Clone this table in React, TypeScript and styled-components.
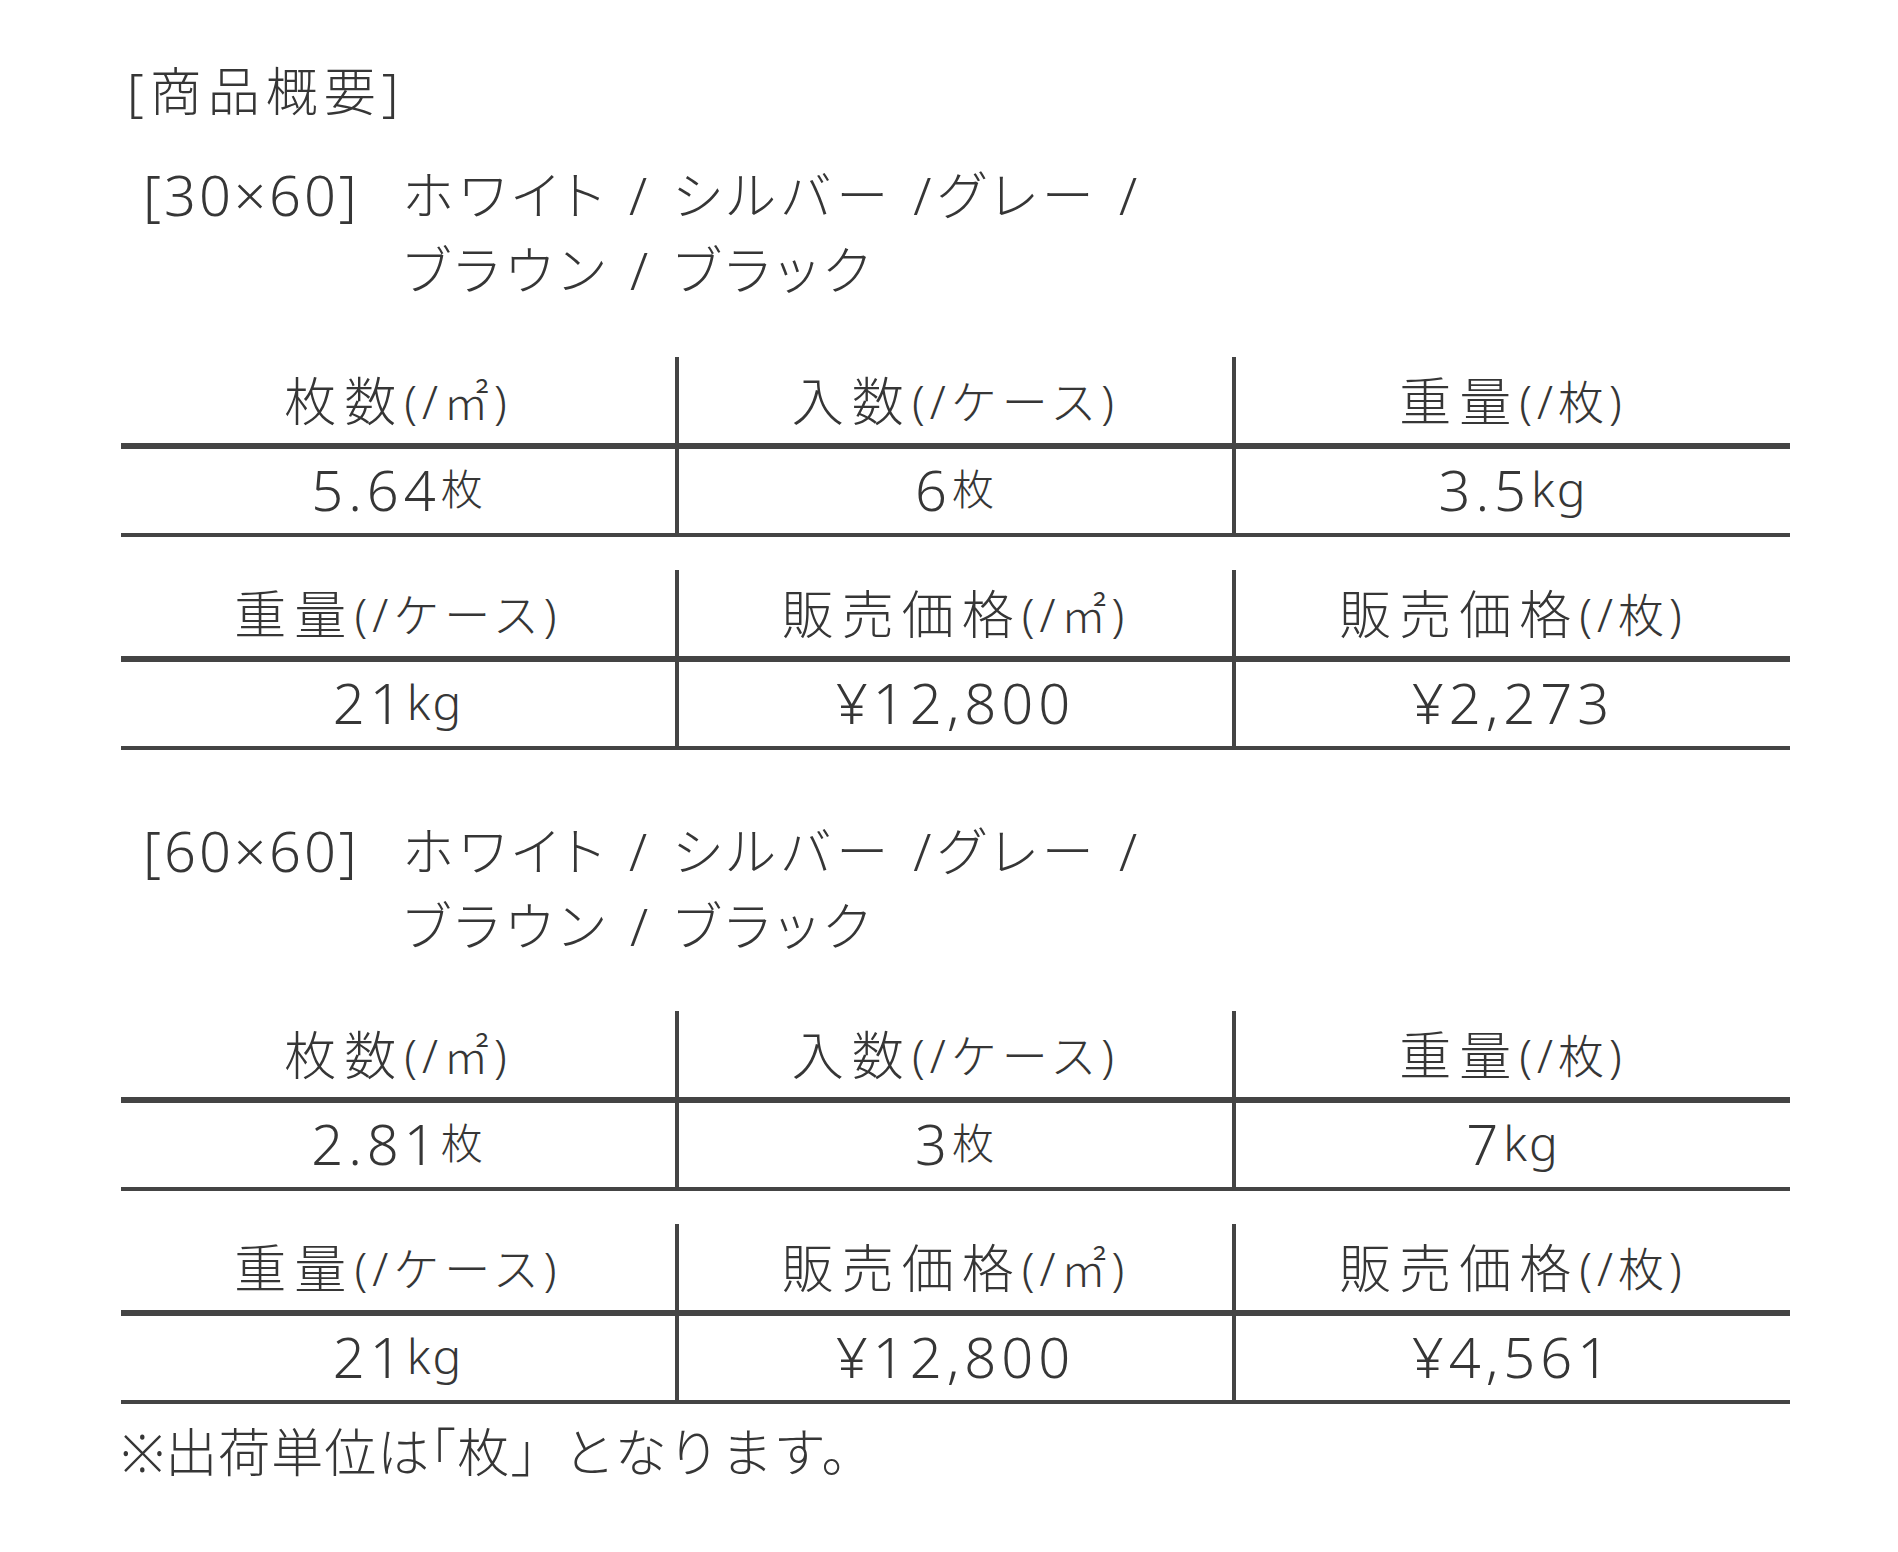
import React from 'react';
import styled, { createGlobalStyle } from 'styled-components';

const Global = createGlobalStyle`
  html, body { margin: 0; padding: 0; background: #ffffff; }
  body {
    font-family: "Noto Sans", "Noto Sans CJK JP", sans-serif;
    font-weight: 300;
    color: #363636;
  }
`;

const LINE = '#444444';

const Page = styled.div`
  width: 1898px;
  min-height: 1552px;
  box-sizing: border-box;
  padding: 53px 0 0 121px;
`;

const Title = styled.h2`
  margin: 0 0 0 6px;
  font-weight: 300;
  font-size: 52px;
  line-height: 75px;
  letter-spacing: 6px;
`;

const SpecHead = styled.div<{ $top: number }>`
  display: grid;
  grid-template-columns: 260px auto;
  margin-top: ${(p) => p.$top}px;
  padding-left: 22px;
`;

const SizeLabel = styled.div`
  font-size: 56px;
  line-height: 75px;
  letter-spacing: 3px;
`;

const Colors = styled.div`
  font-size: 52px;
  line-height: 75px;
  letter-spacing: 6px;
  font-feature-settings: "palt" 1;
`;

const ColorLine = styled.div`
  white-space: pre;
`;

const TableGroup = styled.div<{ $top: number }>`
  display: grid;
  grid-template-columns: 554px 557px 558px;
  margin-top: ${(p) => p.$top}px;
`;

const HeadCell = styled.div<{ $first?: boolean }>`
  box-sizing: border-box;
  height: 92px;
  border-bottom: 6px solid ${LINE};
  border-left: ${(p) => (p.$first ? 'none' : `4px solid ${LINE}`)};
  display: flex;
  align-items: center;
  justify-content: center;
  line-height: 1;
  padding-top: 2px;
`;

const ValueCell = styled.div<{ $first?: boolean }>`
  box-sizing: border-box;
  height: 88px;
  border-bottom: 4px solid ${LINE};
  border-left: ${(p) => (p.$first ? 'none' : `4px solid ${LINE}`)};
  display: flex;
  align-items: center;
  justify-content: center;
  line-height: 1;
  padding-bottom: 4px;
`;

const HeadMain = styled.span`
  font-size: 52px;
  letter-spacing: 8px;
`;

const HeadSub = styled.span`
  font-size: 46px;
  letter-spacing: 5px;
`;

const Num = styled.span`
  font-size: 56px;
  letter-spacing: 5px;
`;

const Unit = styled.span<{ $latin?: boolean }>`
  font-size: ${(p) => (p.$latin ? 48 : 42)}px;
  letter-spacing: 2px;
`;

const Note = styled.p`
  margin: 10px 0 0 0;
  font-size: 52px;
  line-height: 75px;
  letter-spacing: 1px;
`;

const HalfBracket = styled.span`
  font-feature-settings: "halt" 1;
`;

type Head = { main: string; sub: string };
type Val = { num: string; unit?: string };

const Group: React.FC<{ heads: Head[]; vals: Val[]; top: number }> = ({ heads, vals, top }) => (
  <TableGroup $top={top}>
    {heads.map((h, i) => (
      <HeadCell key={'h' + i} $first={i === 0}>
        <HeadMain>{h.main}</HeadMain>
        <HeadSub>{h.sub}</HeadSub>
      </HeadCell>
    ))}
    {vals.map((v, i) => (
      <ValueCell key={'v' + i} $first={i === 0}>
        <Num>{v.num}</Num>
        {v.unit && <Unit $latin={v.unit === 'kg'}>{v.unit}</Unit>}
      </ValueCell>
    ))}
  </TableGroup>
);

const headsA: Head[] = [
  { main: '枚数', sub: '(/㎡)' },
  { main: '入数', sub: '(/ケース)' },
  { main: '重量', sub: '(/枚)' },
];
const headsB: Head[] = [
  { main: '重量', sub: '(/ケース)' },
  { main: '販売価格', sub: '(/㎡)' },
  { main: '販売価格', sub: '(/枚)' },
];

const products = [
  {
    size: '[30×60]',
    a: [
      { num: '5.64', unit: '枚' },
      { num: '6', unit: '枚' },
      { num: '3.5', unit: 'kg' },
    ],
    b: [{ num: '21', unit: 'kg' }, { num: '¥12,800' }, { num: '¥2,273' }],
  },
  {
    size: '[60×60]',
    a: [
      { num: '2.81', unit: '枚' },
      { num: '3', unit: '枚' },
      { num: '7', unit: 'kg' },
    ],
    b: [{ num: '21', unit: 'kg' }, { num: '¥12,800' }, { num: '¥4,561' }],
  },
];

export default function App() {
  return (
    <>
      <Global />
      <Page>
        <Title>[商品概要]</Title>
        {products.map((p, i) => (
          <section key={p.size}>
            <SpecHead $top={i === 0 ? 29 : 63}>
              <SizeLabel>{p.size}</SizeLabel>
              <Colors>
                <ColorLine>{'ホワイト / シルバー /グレー /'}</ColorLine>
                <ColorLine>{'ブラウン / ブラック'}</ColorLine>
              </Colors>
            </SpecHead>
            <Group heads={headsA} vals={p.a} top={i === 0 ? 50 : 48} />
            <Group heads={headsB} vals={p.b} top={33} />
          </section>
        ))}
        <Note>
          ※出荷単位は<HalfBracket>「</HalfBracket>枚」となります。
        </Note>
      </Page>
    </>
  );
}
